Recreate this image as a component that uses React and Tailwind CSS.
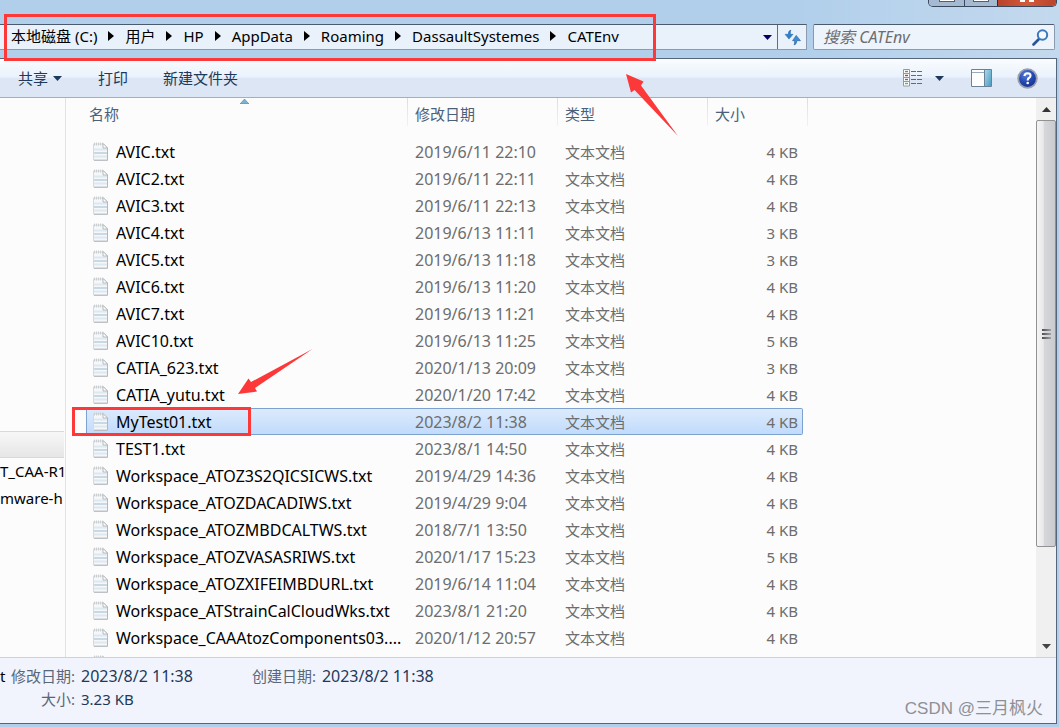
import React from 'react';
import clsx from 'clsx';

const crumbs = ['本地磁盘 (C:)', '用户', 'HP', 'AppData', 'Roaming', 'DassaultSystemes', 'CATEnv'];

const files = [
  { name: 'AVIC.txt', date: '2019/6/11 22:10', size: '4 KB' },
  { name: 'AVIC2.txt', date: '2019/6/11 22:11', size: '4 KB' },
  { name: 'AVIC3.txt', date: '2019/6/11 22:13', size: '4 KB' },
  { name: 'AVIC4.txt', date: '2019/6/13 11:11', size: '3 KB' },
  { name: 'AVIC5.txt', date: '2019/6/13 11:18', size: '3 KB' },
  { name: 'AVIC6.txt', date: '2019/6/13 11:20', size: '4 KB' },
  { name: 'AVIC7.txt', date: '2019/6/13 11:21', size: '4 KB' },
  { name: 'AVIC10.txt', date: '2019/6/13 11:25', size: '5 KB' },
  { name: 'CATIA_623.txt', date: '2020/1/13 20:09', size: '3 KB' },
  { name: 'CATIA_yutu.txt', date: '2020/1/20 17:42', size: '4 KB' },
  { name: 'MyTest01.txt', date: '2023/8/2 11:38', size: '4 KB', selected: true },
  { name: 'TEST1.txt', date: '2023/8/1 14:50', size: '4 KB' },
  { name: 'Workspace_ATOZ3S2QICSICWS.txt', date: '2019/4/29 14:36', size: '4 KB' },
  { name: 'Workspace_ATOZDACADIWS.txt', date: '2019/4/29 9:04', size: '4 KB' },
  { name: 'Workspace_ATOZMBDCALTWS.txt', date: '2018/7/1 13:50', size: '4 KB' },
  { name: 'Workspace_ATOZVASASRIWS.txt', date: '2020/1/17 15:23', size: '5 KB' },
  { name: 'Workspace_ATOZXIFEIMBDURL.txt', date: '2019/6/14 11:04', size: '4 KB' },
  { name: 'Workspace_ATStrainCalCloudWks.txt', date: '2023/8/1 21:20', size: '4 KB' },
  { name: 'Workspace_CAAAtozComponents03....', date: '2020/1/12 20:57', size: '4 KB' },
];

const CrumbArrow = () => (
  <svg width="6" height="10" viewBox="0 0 6 10" className="shrink-0" aria-hidden="true">
    <path d="M0 0 L6 5 L0 10 Z" fill="#000" />
  </svg>
);

const DownArrow = ({ color = '#1e395b' }) => (
  <svg width="9" height="5" viewBox="0 0 9 5" className="shrink-0" aria-hidden="true">
    <path d="M0 0 H9 L4.5 5 Z" fill={color} />
  </svg>
);

const FileIcon = () => (
  <svg width="15" height="19" viewBox="0 0 15 19" className="shrink-0" aria-hidden="true">
    <path d="M.5 2 H11 L14.5 5.5 V18 H.5 Z" fill="#f5f7f9" stroke="#d6dadd" />
    <path d="M1 7.5 H14 M1 14.5 H14" stroke="#dde8ef" strokeWidth="2" />
    <path d="M1 11 H14" stroke="#c9d9e4" strokeWidth="2" />
    <path d="M14.5 6 V18.3 H1" fill="none" stroke="#b3b8bc" />
    <path d="M10 1.5 V6 H14.5 Z" fill="#fff" stroke="#a5abaf" strokeWidth=".8" />
    <path d="M1.5 .5 V3.5 M3.5 .5 V3.5 M5.5 .5 V3.5 M7.5 .5 V3.5 M9.5 .5 V3.5" stroke="#c3c8cb" strokeWidth=".8" />
  </svg>
);

const WindowButtons = () => (
  <div className="absolute right-[2px] top-0 flex h-[7px] overflow-hidden rounded-b-[5px] border border-t-0 border-[#39485c]">
    <button type="button" aria-label="最小化" className="flex w-[35px] justify-center bg-[#a5b9d1]">
      <span className="h-[2px] w-4 border border-t-0 border-[#535f70] bg-white"></span>
    </button>
    <button type="button" aria-label="最大化" className="flex w-[33px] justify-center border-l border-[#39485c] bg-[#a5b9d1]">
      <span className="h-[2px] w-4 border border-t-0 border-[#535f70] bg-white"></span>
    </button>
    <button type="button" aria-label="关闭" className="flex w-[59px] justify-center gap-1 border-l border-[#5a1c14] bg-gradient-to-r from-[#b9432c] via-[#d35b3a] to-[#b9432c]">
      <span className="h-[2px] w-[5px] bg-white"></span>
      <span className="h-[2px] w-[5px] bg-white"></span>
    </button>
  </div>
);

const AddressBar = () => (
  <div className="flex h-[26px] gap-[6px] pr-1">
    <div className="flex min-w-0 flex-1 border border-l-0 border-[#8a9bb0] border-t-[#4b5a6c] bg-[#e9f1fa]">
      <nav aria-label="路径" className="flex flex-1 items-center gap-[11px] pb-[2px] pl-[11px] text-black">
        {crumbs.map((crumb, i) => (
          <React.Fragment key={crumb}>
            {i > 0 && <CrumbArrow />}
            <a href="#" className="whitespace-nowrap">{crumb}</a>
          </React.Fragment>
        ))}
      </nav>
      <button type="button" aria-label="历史记录" className="flex w-5 items-center justify-center">
        <DownArrow color="#000066" />
      </button>
      <button type="button" aria-label="刷新" className="flex w-[29px] items-center justify-center border-l border-[#5f6f82]">
        <svg width="17" height="17" viewBox="0 0 16 16" aria-hidden="true">
          <path d="M6.5 1 Q4 1.5 4 5 H1 L4.7 9.5 L8.5 5 H6 Q5.8 2.5 6.5 1 Z" fill="#2c83cb" stroke="#2568ad" strokeWidth=".5" />
          <path d="M9.5 15 Q12 14.5 12 11 H15.5 L11.5 6 L8 11 H10 Q10.2 13.5 9.5 15 Z" fill="#3b8ed2" stroke="#1c4c91" strokeWidth=".5" />
        </svg>
      </button>
    </div>
    <label className="flex w-[242px] items-center rounded-[2px] border border-[#8a9bb0] border-t-[#4b5a6c] bg-[#edf4fc] pl-[9px] pr-[5px]">
      <input type="text" aria-label="搜索 CATEnv" placeholder="搜索 CATEnv" className="min-w-0 flex-1 bg-transparent text-[16px] italic outline-none placeholder:text-[#6d6d6d]" />
      <svg width="17" height="17" viewBox="0 0 17 17" aria-hidden="true">
        <path d="M7 10 L1.5 15.5" stroke="#2d5596" strokeWidth="2.6" strokeLinecap="round" />
        <circle cx="10.5" cy="6" r="4.7" fill="#f3f9ff" stroke="#3b78bd" strokeWidth="2" />
      </svg>
    </label>
  </div>
);

const Toolbar = () => (
  <div className="flex h-[39px] shrink-0 items-center border-b border-[#a0afc3] bg-[linear-gradient(to_bottom,#fafcff_0%,#e9f2fc_48%,#dce6f4_50%,#dce7f5_100%)] pl-[18px] pr-[18px] text-[#1e395b]">
    <button type="button" className="flex items-center gap-[5px]">
      共享 <DownArrow />
    </button>
    <button type="button" className="ml-[36px]">打印</button>
    <button type="button" className="ml-[35px]">新建文件夹</button>
    <div className="ml-auto flex items-center">
      <button type="button" aria-label="更改视图">
        <svg width="20" height="18" viewBox="0 0 20 18" aria-hidden="true">
          <path d="M.5 .5 H6.5 V17 H.5 Z M.5 4.5 H6.5 M.5 8.5 H6.5 M.5 12.5 H6.5" fill="#fff" stroke="#8e9aa8" />
          <path d="M2 2.5 H5" stroke="#5b9c55" strokeWidth="1.4" />
          <path d="M2 6.5 H5" stroke="#c33c2c" strokeWidth="1.4" />
          <path d="M2 10.5 H5" stroke="#3a74c4" strokeWidth="1.4" />
          <path d="M2 14.5 H5" stroke="#7ba64a" strokeWidth="1.4" />
          <path d="M8 2.5 H19 M8 6.5 H19 M8 10.5 H19 M8 14.5 H19" stroke="#5c6b7d" strokeDasharray="5 1" />
        </svg>
      </button>
      <button type="button" aria-label="更多选项" className="ml-[12px] flex h-5 items-center">
        <DownArrow />
      </button>
      <button type="button" aria-label="预览窗格" className="ml-[27px]">
        <svg width="21" height="18" viewBox="0 0 21 18" aria-hidden="true">
          <defs>
            <linearGradient id="pane" x1="0" y1="0" x2="1" y2="1">
              <stop offset="0" stopColor="#a9d8ea" />
              <stop offset="1" stopColor="#4c9cc2" />
            </linearGradient>
          </defs>
          <path d="M.5 .5 H20.5 V17.5 H.5 Z" fill="#fdfdfd" stroke="#6a8299" />
          <path d="M1 3.5 H14" stroke="#9aaabc" />
          <path d="M14 1 H20 V17 H14 Z" fill="url(#pane)" />
          <path d="M13.5 1 V17" stroke="#6a8299" />
        </svg>
      </button>
      <button type="button" aria-label="帮助" className="ml-[25px]">
        <svg width="21" height="21" viewBox="0 0 21 21" aria-hidden="true">
          <defs>
            <radialGradient id="help" cx=".4" cy=".3" r=".8">
              <stop offset="0" stopColor="#5e83dc" />
              <stop offset=".5" stopColor="#2447b0" />
              <stop offset="1" stopColor="#152c80" />
            </radialGradient>
          </defs>
          <circle cx="10.5" cy="10.5" r="9.3" fill="url(#help)" stroke="#9a9fae" strokeWidth="1.8" />
          <path d="M7.5 8 Q7.6 5.2 10.6 5.2 Q13.6 5.3 13.5 7.8 Q13.4 9.2 11.9 10 Q10.7 10.7 10.7 12.4" fill="none" stroke="#fff" strokeWidth="2.1" />
          <circle cx="10.7" cy="15" r="1.3" fill="#fff" />
        </svg>
      </button>
    </div>
  </div>
);

const headCell = 'relative h-10 p-0 pt-[6px] text-left align-top font-normal text-[#4c607a]';

const HeadDivider = () => (
  <span className="absolute right-0 top-0 h-[28px] w-px bg-gradient-to-b from-[#d5dfee] to-[#eef2f8]"></span>
);

const FileTable = () => (
  <table className="w-[722px] table-fixed border-separate border-spacing-0 text-[#6d6d6d]">
    <colgroup>
      <col className="w-[322px]" />
      <col className="w-[150px]" />
      <col className="w-[150px]" />
      <col className="w-[95px]" />
      <col className="w-[5px]" />
    </colgroup>
    <thead>
      <tr>
        <th scope="col" aria-sort="ascending" className={clsx(headCell, 'pl-[3px]')}>
          名称
          <svg width="9" height="5" viewBox="0 0 9 5" className="absolute left-[154px] top-[1px]" aria-hidden="true">
            <path d="M0 5 L4.5 0 L9 5 Z" fill="#79b4d2" stroke="#3d6f90" strokeWidth=".5" />
          </svg>
          <HeadDivider />
        </th>
        <th scope="col" className={clsx(headCell, 'pl-[7px]')}>修改日期<HeadDivider /></th>
        <th scope="col" className={clsx(headCell, 'pl-[7px]')}>类型<HeadDivider /></th>
        <th scope="col" colSpan={2} className={clsx(headCell, 'pl-[7px]')}>大小<HeadDivider /></th>
      </tr>
    </thead>
    <tbody>
      {files.map((file) => {
        const cell = clsx(
          'h-[27px] border-y p-0',
          file.selected
            ? 'border-[#7da2ce] bg-gradient-to-b from-[#dcebfc] to-[#c1dbfc]'
            : 'border-transparent'
        );
        return (
          <tr key={file.name} aria-selected={file.selected}>
            <td className={clsx(cell, 'border-l', file.selected ? 'rounded-l-[2px]' : '')}>
              <div className="flex h-[25px] items-center gap-2 pl-[6px] text-[16px] text-black">
                <FileIcon />
                <span className="whitespace-nowrap">{file.name}</span>
              </div>
            </td>
            <td className={clsx(cell, 'pl-[7px] text-[16px]')}>{file.date}</td>
            <td className={clsx(cell, 'pl-[7px]')}>文本文档</td>
            <td className={clsx(cell, 'border-r pr-1 text-right', file.selected && 'rounded-r-[2px]')}>{file.size}</td>
            <td></td>
          </tr>
        );
      })}
      <tr>
        <td className="p-0 pl-[7px] pt-1"><FileIcon /></td>
      </tr>
    </tbody>
  </table>
);

const ScrollBar = () => (
  <div className="flex w-5 shrink-0 flex-col bg-[#f0f0f0]">
    <button type="button" aria-label="向上滚动" className="flex h-[22px] items-center justify-center">
      <svg width="9" height="5" viewBox="0 0 9 5" aria-hidden="true"><path d="M0 5 L4.5 0 L9 5 Z" fill="#333" /></svg>
    </button>
    <div className="flex-1">
      <div className="flex h-[83%] flex-col items-center justify-center gap-[2px] rounded-[2px] border border-[#929292] bg-[linear-gradient(to_right,#f5f5f5_0%,#e9e9eb_35%,#d6d7da_40%,#cacbce_100%)]">
        <span className="h-[2px] w-[9px] bg-gradient-to-r from-[#4b4e52] to-[#a0a2a6]"></span>
        <span className="h-[2px] w-[9px] bg-gradient-to-r from-[#4b4e52] to-[#a0a2a6]"></span>
        <span className="h-[2px] w-[9px] bg-gradient-to-r from-[#4b4e52] to-[#a0a2a6]"></span>
      </div>
    </div>
    <button type="button" aria-label="向下滚动" className="flex h-[22px] items-center justify-center">
      <DownArrow color="#444" />
    </button>
  </div>
);

const DetailsPane = () => (
  <footer className="flex h-[66px] shrink-0 border-t border-[#c5d3e6] bg-[#f1f4fc] pt-[7px] leading-[23px] text-[#1e395b]">
    <span className="w-[11px] text-black">t</span>
    <dl className="grid grid-cols-[64px_auto] content-start gap-x-[6px]">
      <dt className="whitespace-nowrap text-right text-[#5a6779]">修改日期:</dt>
      <dd className="text-[16px]">2023/8/2 11:38</dd>
      <dt className="text-right text-[#5a6779]">大小:</dt>
      <dd>3.23 KB</dd>
    </dl>
    <dl className="ml-[59px] grid grid-cols-[64px_auto] content-start gap-x-[6px]">
      <dt className="whitespace-nowrap text-right text-[#5a6779]">创建日期:</dt>
      <dd className="text-[16px]">2023/8/2 11:38</dd>
    </dl>
    <p className="ml-auto mr-[13px] mt-8 font-['Liberation_Sans','Noto_Sans_CJK_SC',sans-serif] text-[17px] text-[#8e9096]">CSDN @三月枫火</p>
  </footer>
);

// Red marks drawn over the window
const Annotations = () => (
  <div className="pointer-events-none absolute inset-0">
    <div className="absolute left-[4px] top-[14px] h-[47px] w-[652px] border-3 border-[#fd3838]"></div>
    <div className="absolute left-[72px] top-[407px] h-[29px] w-[179px] border-3 border-[#fd3838]"></div>
    <svg width="53" height="63" viewBox="0 0 53 63" className="absolute left-[626px] top-[74px]" aria-hidden="true">
      <path d="M0 0 L17.5 7.5 L15 11.5 L52 62 L8.5 16 L5 18.5 Z" fill="#fd3838" />
    </svg>
    <svg width="75" height="46" viewBox="0 0 75 46" className="absolute left-[238px] top-[349px]" aria-hidden="true">
      <path d="M0 45 L10.5 29.5 L13 33 L74.5 0 L17 39 L19 42.5 Z" fill="#fd3838" />
    </svg>
  </div>
);

const App = () => {
  return (
    <div className="relative flex h-screen flex-col overflow-hidden bg-[#b1cfeb] font-['Noto_Sans','Noto_Sans_CJK_SC',sans-serif] text-[15px] leading-5">
      <header className="h-[58px] shrink-0 bg-[linear-gradient(to_right,#b1cfeb_0%,#b1cfeb_75%,#c3d9ee_100%)] pt-6">
        <WindowButtons />
        <AddressBar />
      </header>

      <div className="mb-[3px] mr-[2px] flex min-h-0 flex-1 flex-col border border-l-0 border-[#56657a] bg-[#fcfcfc]">
        <Toolbar />
        <main className="flex min-h-0 flex-1">
          <aside className="w-[66px] shrink-0 overflow-hidden whitespace-nowrap border-r border-[#d6e5f5] pr-[1px] pt-[333px] text-black">
            <div className="h-[27px] border-y border-[#d9d9d9] bg-gradient-to-b from-[#f7f7f7] to-[#e6e6e6]"></div>
            <ul className="overflow-hidden leading-[27px]">
              <li>T_CAA-R1</li>
              <li>mware-h</li>
            </ul>
          </aside>
          <section className="min-w-0 flex-1 overflow-hidden pl-5">
            <FileTable />
          </section>
          <ScrollBar />
        </main>
        <DetailsPane />
      </div>

      <Annotations />
    </div>
  );
};

export default App;
